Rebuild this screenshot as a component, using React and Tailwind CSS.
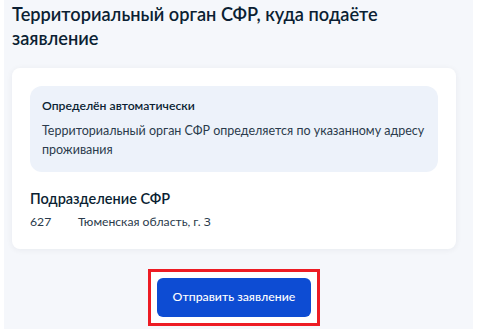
import React from 'react';

const App = () => {
  return (
    <div className="min-h-screen bg-white px-[4px]" style={{ fontFamily: 'Lato, "Noto Sans", sans-serif' }}>
      <div className="min-h-[329px] bg-[#f5f7fb] px-2 pt-[2px] text-[#0b1f33]">
        {/* Section title */}
        <h2 className="text-[18.2px] leading-[24px] font-semibold pr-6">
          Территориальный орган СФР, куда подаёте заявление
        </h2>

        {/* Card */}
        <div className="mt-[18px] w-[444px] rounded-lg bg-white p-[18px] pb-[18px] shadow-[0_1px_6px_rgba(11,31,51,0.06)]">
          <div className="rounded-xl bg-[#edf2fa] px-3 pt-[11px] pb-[13px]">
            <div className="text-[12.2px] leading-[18px] font-semibold">Определён автоматически</div>
            <p className="mt-[6px] text-[12.5px] leading-[19px] text-[#2b3b4c]">
              Территориальный орган СФР определяется по указанному адресу проживания
            </p>
          </div>

          <div className="mt-[17px] text-[14.5px] leading-[20px] font-semibold">Подразделение СФР</div>
          <div className="mt-[4px] flex text-[12.2px] leading-[18px] text-[#2b3b4c]">
            <span className="w-[48px]">627</span>
            <span>Тюменская область, г. З</span>
          </div>
        </div>

        {/* Submit */}
        <div className="mt-[20px] flex w-[444px] justify-center">
          <div className="border-[3px] border-[#ed1c24] bg-white p-[6px]">
            <button className="h-[39px] w-[154px] rounded-md bg-[#0d4cd3] text-[12.3px] font-medium text-white">
              Отправить заявление
            </button>
          </div>
        </div>
      </div>
    </div>
  );
};

export default App;
